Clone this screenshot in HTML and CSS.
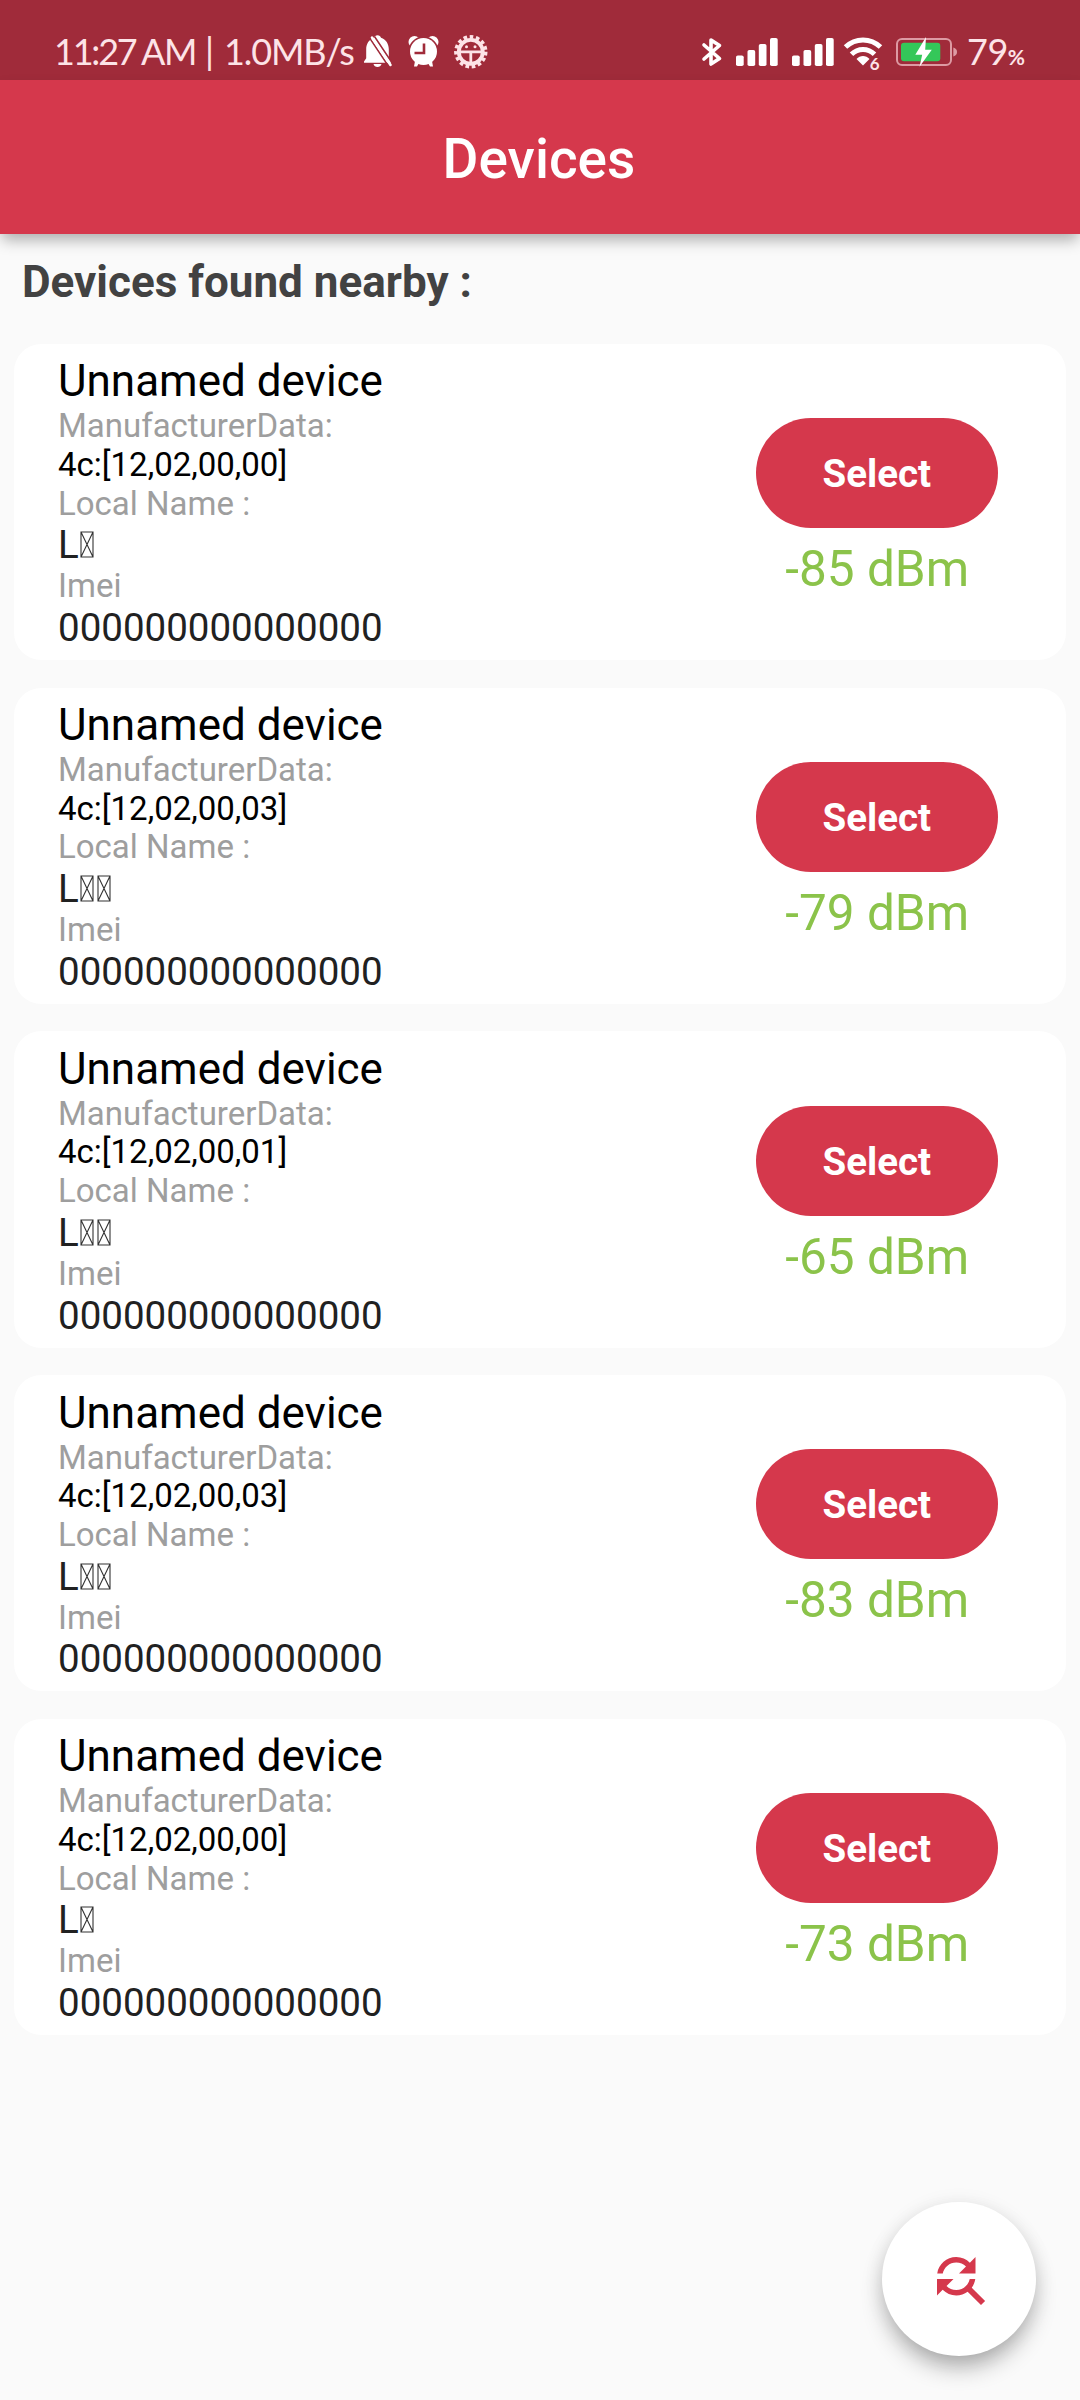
FILE: index.html
```html
<!DOCTYPE html>
<html lang="en">
<head>
<meta charset="utf-8">
<title>Devices</title>
<link rel="stylesheet" href="styles.css">
</head>
<body>
<svg width="0" height="0" class="defs">
  <symbol id="box" viewBox="0 0 14 27">
    <path d="M1 1h12v25H1zL13 26M13 1L1 26" fill="none" stroke="#333" stroke-width="1.1"/>
  </symbol>
</svg>
<div class="screen">
  <div class="status-bar">
    <div class="status-text">
      <span class="clock">11:27</span><span class="meridiem">AM</span><span class="divider">|</span><span class="speed">1.0MB/s</span>
    </div>
    <svg viewBox="360 30 130 44" width="130" height="44">
      <path fill="#fff" d="M377.500 35.300c1.800 0 3 .9 3.500 2.400c5 1.800 7.800 6 7.800 11.500v9l2.200 3.300v1.300h-27v-1.300l2.200-3.300v-9c0-5.500 2.800-9.700 7.800-11.500c.5-1.500 1.700-2.400 3.500-2.400zM373.500 64h8c-.7 4-7.300 4-8 0z"/>
      <path stroke="#a02b3a" stroke-width="1.500" fill="none" d="M369 37l19 28.500M374.500 36.500l18 27"/>
      <path stroke="#fff" stroke-width="2.600" fill="none" stroke-linecap="round" d="M372 37.500l18.500 27.500"/>
      <g fill="#fff">
        <circle cx="414.500" cy="42" r="6"/><circle cx="432.500" cy="42" r="6"/>
        <circle cx="423.500" cy="51.800" r="15.300" fill="#a02b3a"/>
        <circle cx="423.500" cy="51.500" r="13.500"/>
        <path d="M415 61l4 2-2 3.500h-3zM432 61l-4 2 2 3.500h3z"/>
      </g>
      <path d="M424 43.500v9.500h-9.500" fill="none" stroke="#a02b3a" stroke-width="2.600"/>
      <g fill="none" stroke="#fde3e7">
        <circle cx="470.800" cy="51.800" r="12" stroke-width="3.800"/>
        <circle cx="470.800" cy="51.800" r="14.900" stroke-width="3.600" stroke-dasharray="3.600 2.641"/>
        <path d="M459 51.800h24M470.800 52v12" stroke-width="2.800"/>
      </g>
      <g fill="#fde3e7"><circle cx="466.500" cy="46.700" r="1.500"/><circle cx="475" cy="46.700" r="1.500"/></g>
    </svg>
    <svg class="system-icons" viewBox="695 30 272 44" width="272" height="44">
      <path stroke="#fff" stroke-width="3.600" stroke-linejoin="round" stroke-linecap="round" fill="none" d="M704 45l15.500 13.500-8.500 5.500v-24l8.500 5.500-15.500 13.500"/>
      <g fill="#fff">
        <rect x="736" y="55.500" width="7.700" height="10.500" rx="1.800"/><rect x="747.500" y="50" width="7.700" height="16" rx="1.800"/><rect x="758.800" y="44" width="7.700" height="22" rx="1.800"/><rect x="770" y="38" width="7.700" height="28" rx="1.800"/>
        <rect x="792" y="55.500" width="7.700" height="10.500" rx="1.800"/><rect x="803.500" y="50" width="7.700" height="16" rx="1.800"/><rect x="814.800" y="44" width="7.700" height="22" rx="1.800"/><rect x="826" y="38" width="7.700" height="28" rx="1.800"/>
        <path d="M863 65.500l-6.500-6.500c3.500-4 9.500-4 13 0z"/>
      </g>
      <path fill="none" stroke="#fff" stroke-width="5" d="M845.500 47c10-9.500 25-9.500 35 0M851.500 54.300c6.500-6.500 16.500-6.500 23 0"/>
      <path fill="none" stroke="#a02b3a" stroke-width="2" d="M868.500 68c-.5-4 1.500-7 5-11"/>
      <text x="869.800" y="70" class="wifi-gen">6</text>
      <rect x="897" y="38.900" width="54" height="26" rx="5" fill="none" stroke="#dd9aa3" stroke-width="2"/>
      <path d="M953.300 47.500c5 1 5 8 0 9z" fill="#dd9aa3"/>
      <rect x="901" y="42.700" width="39.300" height="18.600" rx="3" fill="#34c759"/>
      <path fill="#fff" d="M926 37l-10.700 17.800h6.900l-2.700 12 12.300-17h-6.600z"/>
    </svg>
    <span class="battery-level">79<small>%</small></span>
  </div>
  <header class="app-bar"><h1>Devices</h1></header>
  <main>
    <h2>Devices found nearby :</h2>
    <article class="card">
      <div class="info">
        <p class="name">Unnamed device</p>
        <p class="label">ManufacturerData:</p><p class="data">4c:[12,02,00,00]</p>
        <p class="label">Local Name :</p><p class="value">L<svg class="box"><use href="#box"/></svg></p>
        <p class="label">Imei</p><p class="value">000000000000000</p>
      </div>
      <div class="action"><button>Select</button><p class="signal">-85 dBm</p></div>
    </article>
    <article class="card">
      <div class="info">
        <p class="name">Unnamed device</p>
        <p class="label">ManufacturerData:</p><p class="data">4c:[12,02,00,03]</p>
        <p class="label">Local Name :</p><p class="value">L<svg class="box"><use href="#box"/></svg><svg class="box"><use href="#box"/></svg></p>
        <p class="label">Imei</p><p class="value">000000000000000</p>
      </div>
      <div class="action"><button>Select</button><p class="signal">-79 dBm</p></div>
    </article>
    <article class="card">
      <div class="info">
        <p class="name">Unnamed device</p>
        <p class="label">ManufacturerData:</p><p class="data">4c:[12,02,00,01]</p>
        <p class="label">Local Name :</p><p class="value">L<svg class="box"><use href="#box"/></svg><svg class="box"><use href="#box"/></svg></p>
        <p class="label">Imei</p><p class="value">000000000000000</p>
      </div>
      <div class="action"><button>Select</button><p class="signal">-65 dBm</p></div>
    </article>
    <article class="card">
      <div class="info">
        <p class="name">Unnamed device</p>
        <p class="label">ManufacturerData:</p><p class="data">4c:[12,02,00,03]</p>
        <p class="label">Local Name :</p><p class="value">L<svg class="box"><use href="#box"/></svg><svg class="box"><use href="#box"/></svg></p>
        <p class="label">Imei</p><p class="value">000000000000000</p>
      </div>
      <div class="action"><button>Select</button><p class="signal">-83 dBm</p></div>
    </article>
    <article class="card">
      <div class="info">
        <p class="name">Unnamed device</p>
        <p class="label">ManufacturerData:</p><p class="data">4c:[12,02,00,00]</p>
        <p class="label">Local Name :</p><p class="value">L<svg class="box"><use href="#box"/></svg></p>
        <p class="label">Imei</p><p class="value">000000000000000</p>
      </div>
      <div class="action"><button>Select</button><p class="signal">-73 dBm</p></div>
    </article>
  </main>
  <button class="fab" aria-label="Scan again">
    <svg viewBox="0 0 24 24" width="66" height="66"><path fill="#d5384c" d="M11 6c1.380 0 2.630.56 3.540 1.460L12 10h6V4l-2.050 2.050C14.680 4.780 12.930 4 11 4c-3.530 0-6.430 2.610-6.920 6H6.100c.46-2.280 2.480-4 4.900-4zm5.640 9.140c.66-.9 1.120-1.970 1.280-3.140H15.900c-.46 2.280-2.480 4-4.900 4-1.380 0-2.630-.56-3.540-1.460L10 12H4v6l2.050-2.050C7.320 17.220 9.070 18 11 18c1.550 0 2.980-.51 4.140-1.360L20 21.490 21.490 20l-4.850-4.860z"/></svg>
  </button>
</div>
</body>
</html>
```
FILE: styles.css
```css
* { box-sizing: border-box; margin: 0; padding: 0; }
body { background: #fafafa; font-family: Roboto, sans-serif; }
.defs { position: absolute; }
.screen { position: relative; width: 1080px; height: 2400px; overflow: hidden; }

.status-bar { height: 80px; background: #a02b3a; display: flex; padding: 30px 0 0 54px; color: #fde3e7; font-family: Lato, sans-serif; font-size: 36px; line-height: 42px; }
.status-bar svg { flex: none; }
.status-text { width: 306px; display: flex; white-space: nowrap; }
.clock { width: 87px; letter-spacing: -2.2px; }
.meridiem { width: 64px; letter-spacing: -1.4px; }
.divider { width: 19px; }
.speed { letter-spacing: -1.1px; }
.system-icons { margin-left: 205px; }
.battery-level { letter-spacing: -.5px; }
.battery-level small { font-size: 21px; font-weight: 700; letter-spacing: 0; }
.wifi-gen { font: 700 17px Lato, sans-serif; fill: #fde3e7; }

.app-bar { position: relative; height: 154px; padding: 3px 2px 0 0; background: #d5384c; color: #fff; display: flex; align-items: center; justify-content: center; box-shadow: 0 8px 14px -2px rgba(0,0,0,.31); }
.app-bar h1 { font-size: 55px; font-weight: 500; }

h2 { font-size: 44px; line-height: 52px; color: #424242; padding: 22px 22px 35.75px; }
.card { height: 316.25px; margin: 0 13.75px 27.5px; border-radius: 27.5px; background: #fff; display: flex; justify-content: space-between; padding: 0 68px 0 44.25px; }
.info { padding-top: 12.5px; }
.name { font-size: 44px; line-height: 51px; color: #000; }
.label { font-size: 33px; line-height: 38.7px; color: #9e9e9e; }
.data { font-size: 33px; line-height: 38.7px; color: #000; }
.value { font-size: 38.5px; line-height: 44px; color: #212121; }
.box { width: 14px; height: 27px; margin-left: 1px; margin-right: 2px; vertical-align: baseline; }
.action { width: 242px; padding-top: 74.25px; text-align: center; }
.action button { width: 242px; height: 110px; padding: 1px 1px 0 0; border: 0; border-radius: 55px; background: #d5384c; color: #fff; font: 700 38.5px Roboto, sans-serif; }
.signal { margin-top: 12px; font-size: 49.5px; line-height: 58px; color: #8bc34a; }

.fab { position: absolute; left: 882px; top: 2202px; width: 154px; height: 154px; border: 0; border-radius: 50%; background: #fff; display: flex; align-items: center; justify-content: center; box-shadow: 0 14px 24px -4px rgba(0,0,0,.32), 0 2px 20px rgba(0,0,0,.08); }
```
